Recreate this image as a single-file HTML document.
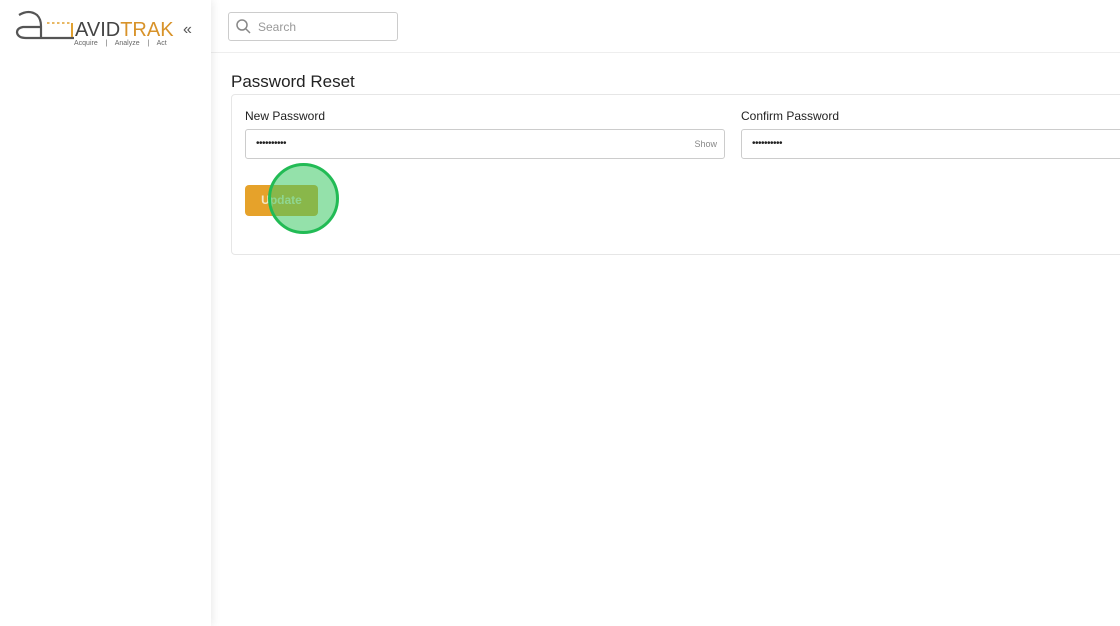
<!DOCTYPE html>
<html><head><style>
*{box-sizing:border-box;margin:0;padding:0}
body{width:1120px;height:626px;overflow:hidden;background:#fff;font-family:"Liberation Sans",sans-serif;position:relative}
.side{position:absolute;left:0;top:0;width:211px;height:626px;background:#fff;box-shadow:2px 0 8px rgba(0,0,0,.08);z-index:2}
.hdr{position:absolute;left:211px;top:0;right:0;height:53px;border-bottom:1px solid #eee}
.search{position:absolute;left:228px;top:12px;width:170px;height:29px;border:1px solid #ccc;border-radius:3px}
.search span{position:absolute;left:29px;top:7px;font-size:12px;color:#999}
h1{position:absolute;left:231px;top:72px;font-size:17px;font-weight:normal;color:#222}
.card{position:absolute;left:231px;top:94px;width:900px;height:161px;border:1px solid #e6e6e6;border-radius:4px}
.lbl{position:absolute;font-size:12px;color:#222}
.inp{position:absolute;height:30px;border:1px solid #ccc;border-radius:3px;font-size:10px;padding-left:10px;line-height:28px;color:#222;letter-spacing:-0.5px}
.btn{position:absolute;left:245px;top:185px;width:73px;height:31px;background:#e6a22a;border-radius:4px;color:#f3e7c5;font-weight:bold;font-size:12px;text-align:center;line-height:31px}
.circ{position:absolute;left:268px;top:163px;width:71px;height:71px;border-radius:50%;background:rgba(60,200,100,.55);border:3px solid #22bb55}
</style></head><body>
<div class="side">
<svg width="62" height="30" style="position:absolute;left:14px;top:10px" viewBox="0 0 62 30">
<path d="M5 5 Q15 -1 23 5 Q27 9 27 16 L27 28 M27 17 L9 17 Q3 18 3 22.5 Q4 28 12 28 L60 28" fill="none" stroke="#555" stroke-width="2.2"/>
<path d="M33 13 H58" stroke="#e0a030" stroke-width="1.6" stroke-dasharray="2.5 2.5"/>
<path d="M58 13 V27" stroke="#e0a030" stroke-width="2"/>
</svg>
<div style="position:absolute;left:75px;top:19px;font-size:20px;color:#444">AVID<span style="color:#d8932a">TRAK</span></div>
<div style="position:absolute;left:74px;top:40px;font-size:7px;color:#666;white-space:pre">Acquire    |    Analyze    |    Act</div>
<div style="position:absolute;left:183px;top:21px;font-size:16px;color:#555">«</div>
</div>
<div class="hdr"></div>
<div class="search"><svg width="16" height="16" style="position:absolute;left:7px;top:6px"><circle cx="6" cy="6" r="5" fill="none" stroke="#888" stroke-width="1.5"/><path d="M10 10 L14 14" stroke="#888" stroke-width="1.5"/></svg><span>Search</span></div>
<h1>Password Reset</h1>
<div class="card"></div>
<div class="lbl" style="left:245px;top:109px">New Password</div>
<div class="lbl" style="left:741px;top:109px">Confirm Password</div>
<div class="inp" style="left:245px;top:129px;width:480px">••••••••••<span style="position:absolute;right:7px;top:0;font-size:9px;color:#888;letter-spacing:0">Show</span></div>
<div class="inp" style="left:741px;top:129px;width:400px">••••••••••</div>
<div class="btn">Update</div>
<div class="circ"></div>
</body></html>
